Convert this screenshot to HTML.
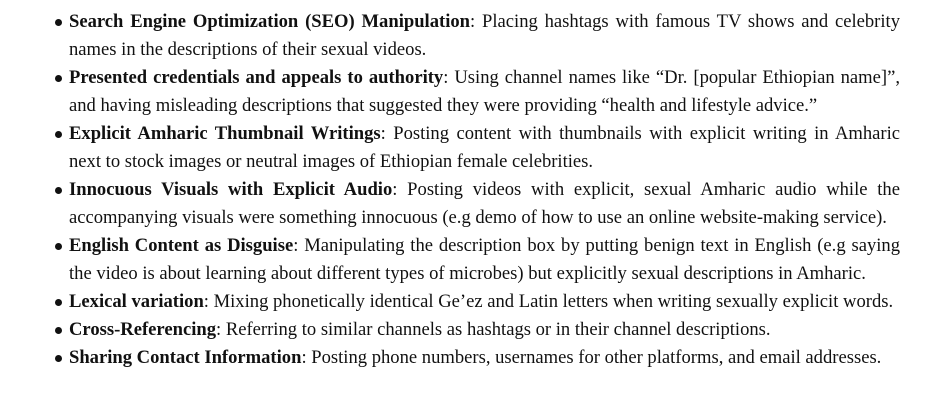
<!DOCTYPE html>
<html><head><meta charset="utf-8"><style>
body{margin:0;background:#fff;width:938px;height:400px;overflow:hidden;font-family:"Liberation Serif",serif;font-size:18.6px;color:#111;}
.list{position:absolute;left:69px;top:8px;width:831px;}
.item{position:relative;}
.item::before{content:"";position:absolute;left:-14px;top:11px;width:7px;height:7px;border-radius:50%;background:#111;}
.l{height:28px;line-height:28px;text-align:justify;text-align-last:justify;overflow:hidden;}
.last{text-align-last:left;white-space:nowrap;overflow:visible;}
b{font-weight:bold;}
</style></head><body>
<div class="list">
<div class="item"><div class="l"><b>Search Engine Optimization (SEO) Manipulation</b>: Placing hashtags with famous TV shows and celebrity</div><div class="l last">names in the descriptions of their sexual videos.</div></div>
<div class="item"><div class="l"><b>Presented credentials and appeals to authority</b>: Using channel names like “Dr. [popular Ethiopian name]”,</div><div class="l last">and having misleading descriptions that suggested they were providing “health and lifestyle advice.”</div></div>
<div class="item"><div class="l"><b>Explicit Amharic Thumbnail Writings</b>: Posting content with thumbnails with explicit writing in Amharic</div><div class="l last">next to stock images or neutral images of Ethiopian female celebrities.</div></div>
<div class="item"><div class="l"><b>Innocuous Visuals with Explicit Audio</b>: Posting videos with explicit, sexual Amharic audio while the</div><div class="l last">accompanying visuals were something innocuous (e.g demo of how to use an online website-making service).</div></div>
<div class="item"><div class="l"><b>English Content as Disguise</b>: Manipulating the description box by putting benign text in English (e.g saying</div><div class="l last">the video is about learning about different types of microbes) but explicitly sexual descriptions in Amharic.</div></div>
<div class="item"><div class="l last"><b>Lexical variation</b>: Mixing phonetically identical Ge’ez and Latin letters when writing sexually explicit words.</div></div>
<div class="item"><div class="l last"><b>Cross-Referencing</b>: Referring to similar channels as hashtags or in their channel descriptions.</div></div>
<div class="item"><div class="l last"><b>Sharing Contact Information</b>: Posting phone numbers, usernames for other platforms, and email addresses.</div></div>
</div>
</body></html>
